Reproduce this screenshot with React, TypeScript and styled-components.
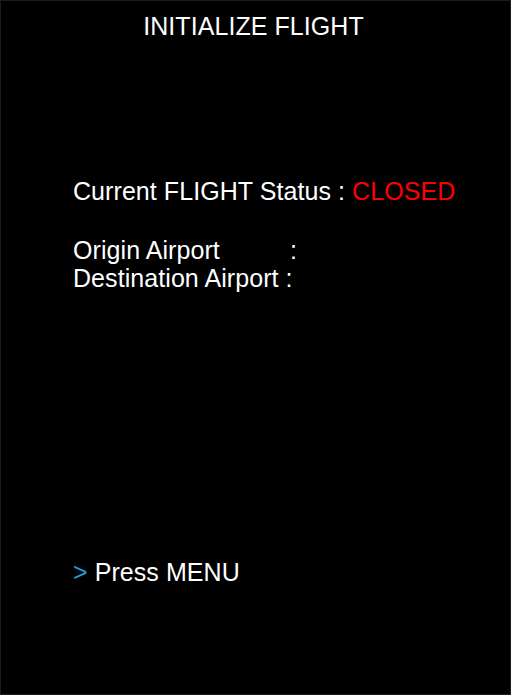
import React from "react";
import styled, { createGlobalStyle } from "styled-components";

const GlobalStyle = createGlobalStyle`
  html, body {
    margin: 0;
    padding: 0;
    background: #000;
  }
  body {
    font-family: "Liberation Sans", Arial, sans-serif;
  }
`;

const Screen = styled.div`
  box-sizing: border-box;
  width: 511px;
  height: 695px;
  border: 1px solid #1c1c1c;
  background: #000;
  color: #fff;
  font-size: 25px;
  line-height: 28px;
  letter-spacing: 0.07px;
  display: flex;
  flex-direction: column;
`;

const Title = styled.div`
  margin-top: 11px;
  text-align: center;
  padding-right: 4px;
`;

const Body = styled.div`
  padding-left: 72px;
  display: flex;
  flex-direction: column;
`;

const Line = styled.div<{ $gap?: number }>`
  margin-top: ${(p) => p.$gap ?? 0}px;
  white-space: pre;
`;

const Closed = styled.span`
  color: #ff0000;
`;

const Prompt = styled.span`
  color: #1e9bd6;
`;

const App = () => {
  return (
    <>
      <GlobalStyle />
      <Screen>
        <Title>INITIALIZE FLIGHT</Title>
        <Body>
          <Line $gap={137}>
            Current FLIGHT Status : <Closed>CLOSED</Closed>
          </Line>
          <Line $gap={31}>Origin Airport{"          "}:</Line>
          <Line>Destination Airport :</Line>
          <Line $gap={266}>
            <Prompt>&gt;</Prompt> Press MENU
          </Line>
        </Body>
      </Screen>
    </>
  );
};

export default App;
